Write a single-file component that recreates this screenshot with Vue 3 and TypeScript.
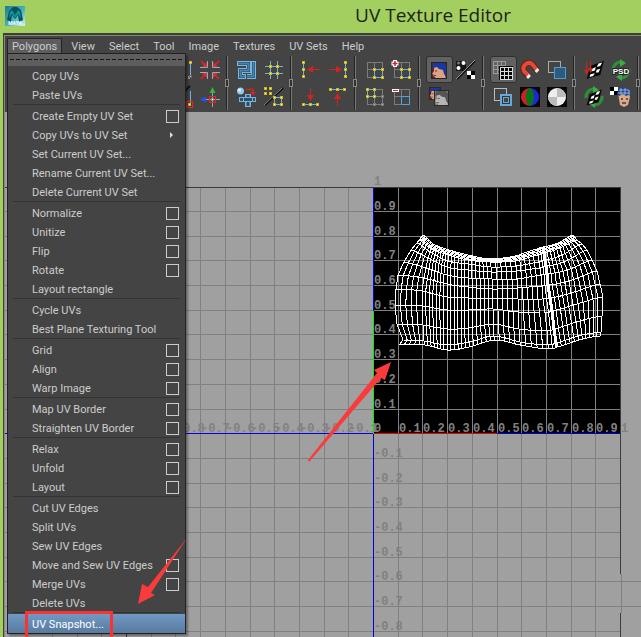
<script setup lang="ts">
type Point = [number, number]

interface MenuEntry {
  label: string
  option?: boolean
  submenu?: boolean
  active?: boolean
}

interface Tool {
  name: string
  art: string
  pressed?: boolean
}

const menus: string[] = ['View', 'Select', 'Tool', 'Image', 'Textures', 'UV Sets', 'Help']

const o = (label: string): MenuEntry => ({ label, option: true })
const p = (label: string): MenuEntry => ({ label })

const sections: MenuEntry[][] = [
  [p('Copy UVs'), p('Paste UVs')],
  [
    o('Create Empty UV Set'),
    { label: 'Copy UVs to UV Set', submenu: true },
    p('Set Current UV Set...'),
    p('Rename Current UV Set...'),
    p('Delete Current UV Set'),
  ],
  [o('Normalize'), o('Unitize'), o('Flip'), o('Rotate'), p('Layout rectangle')],
  [p('Cycle UVs'), p('Best Plane Texturing Tool')],
  [o('Grid'), o('Align'), o('Warp Image')],
  [o('Map UV Border'), o('Straighten UV Border')],
  [o('Relax'), o('Unfold'), o('Layout')],
  [
    p('Cut UV Edges'),
    p('Split UVs'),
    p('Sew UV Edges'),
    o('Move and Sew UV Edges'),
    o('Merge UVs'),
    p('Delete UVs'),
  ],
  [{ label: 'UV Snapshot...', active: true }],
]

/* ---- toolbar art, drawn on a 24 unit square ---- */
const node = (x: number, y: number, fill = '#ffffa8', edge = '#c9b51e'): string =>
  `<rect x="${x - 1}" y="${y - 1}" width="2" height="2" fill="${fill}" stroke="${edge}"/>`
const nodes = (list: Point[], fill?: string, edge?: string): string =>
  list.map(([x, y]) => node(x, y, fill, edge)).join('')
const line = (d: string, color: string, width = 1): string =>
  `<path d="${d}" fill="none" stroke="${color}" stroke-width="${width}"/>`
const solid = (d: string, color: string): string => `<path d="${d}" fill="${color}"/>`
const cells = line('M4 4.5H20M4 11.5H20M4 19.5H20M4.5 4V20M11.5 4V20M19.5 4V20', '#7c7c7c')
const blue = '#6fb0e0'
const red = '#d32222'
const face = (x: number, y: number, w: number, skin: string, hair: string, back: string): string =>
  `<g transform="translate(${x} ${y}) scale(${w / 16})">` +
  `<rect width="16" height="17" fill="${back}"/>` +
  solid('M3 5L9 4L14 7L14 13L15 17H5L4 15L2 14L3 13L1 12L3 9Z', skin) +
  solid('M1 5L3 1L13 1L15 4V14L13 12L12 8L8 7L6 5L2 6Z', hair) +
  line('M4 9H6M3 13.500H5', '#733') +
  `<rect x=".5" y=".5" width="15" height="16" fill="none" stroke="#262626"/></g>`
const dice =
  solid('M6 9L21 3L17 19L2 23Z', '#080808') +
  solid('M15 6L19 5L17 9L13 10ZM8 12L12 10L11 14L7 15ZM13 13L17 12L15 16L12 16ZM6 18L11 17L9 20L5 21Z', '#fff')
const cycle =
  line('M4 13A8 8 0 0 1 12 4', '#2d8f36', 3) +
  line('M20 11A8 8 0 0 1 12 20', '#2d8f36', 3) +
  solid('M11 1L17 5L11 9ZM13 15V23L7 19Z', '#3cab45')

const groups: Tool[][] = [
  [
    { name: 'Unfold vertices', art: line('M19.500 4V20', blue) + line('M18 18V21', '#999', 2) + nodes([[19.5, 4.5]]) + nodes([[19.5, 18.5]], '#bbb', '#666') },
    {
      name: 'Shrink inward',
      art:
        line('M2 9.500H9.500V3M2 14.500H9.500V21M22 9.500H14.500V3M22 14.500H14.500V21', '#7fb1d2') +
        line('M3 3L8 8M21 3L16 8M3 21L8 16M21 21L16 16', red, 2) +
        solid('M9 4V9H4ZM15 4V9H20ZM9 20V15H4ZM15 20V15H20Z', '#e32b2b'),
    },
    { name: 'Snap vertex', art: line('M3 17L19 1', '#111', 2) + line('M19.500 6V20', blue) + nodes([[18.5, 19.5]]) + '<rect x="15.500" y="16.500" width="6" height="6" fill="none" stroke="#e22" stroke-width="1"/>' },
    {
      name: 'Move axes',
      art:
        line('M7 14.500H22M14.500 8V22', '#9aa6ae') +
        solid('M14.500 2L17.500 8H11.500Z', '#35b83a') +
        solid('M1.500 14.500L8 11.500V17.500Z', '#2a4ee0') +
        node(14.5, 14.5, '#fff', '#888') +
        '<rect x="11.500" y="11.500" width="6" height="6" fill="none" stroke="#e22"/>',
    },
  ],
  [
    {
      name: 'Layout shells',
      art:
        line('M2 5.500H13.500V12.500H5.500V18.500H11M18.500 3V18.500H12', '#79b5dd', 5) +
        line('M3 5.500H13.500V12.500H5.500V18.500H10M18.500 4V18.500H12', '#1f4663', 3) +
        line('M3 5.500H13.500V12.500H5.500V18.500H10M18.500 4V18.500H12', '#4b83ab', 2),
    },
    { name: 'Grid points', art: line('M3 8.500H21M3 15.500H21M8.500 3V21M15.500 3V21', blue) + nodes([[8.5, 8.5], [15.5, 8.5], [8.5, 15.5], [15.5, 15.5]]) },
    {
      name: 'Map cube',
      art:
        solid('M4 12H10V9H16V12H21V17H16V22H10V17H4Z', '#7ab3dc') +
        line('M5 14.500H20M13 10V21', '#28506c', 3) +
        line('M8.500 12V17M10.500 16.500H16M10.500 12.500H16M17.500 12V17', '#7ab3dc') +
        '<circle cx="5.500" cy="6" r="3.500" fill="#8fc9ec"/><circle cx="4.500" cy="5" r="1.500" fill="#dff3ff"/>' +
        line('M11 4.500H18V8', red, 1.5) +
        solid('M15 7H21L18 11Z', red),
    },
    {
      name: 'Split points',
      art: line('M3 20L21 3', '#111', 2) + line('M2 20L20 3', '#888') + line('M12.500 12.500H19.500V19.500H12.500Z', blue) + nodes([[3.5, 3.5], [8.5, 3.5], [3.5, 8.5], [8.5, 8.5], [12.5, 12.5], [19.5, 12.5], [12.5, 19.5], [19.5, 19.5]]),
    },
  ],
  [
    { name: 'Align left', art: line('M4.500 4V19', blue) + nodes([[4.5, 4.5], [4.5, 11.5], [4.5, 18.5]]) + line('M12 11.500H21', red) + solid('M8 11.500L14 8V15Z', red) },
    { name: 'Align right', art: line('M19.500 4V19', blue) + nodes([[19.5, 4.5], [19.5, 11.5], [19.5, 18.5]]) + line('M3 11.500H12', red) + solid('M16 11.500L10 8V15Z', red) },
    { name: 'Align bottom', art: line('M4 19.500H19', blue) + nodes([[4.5, 19.5], [11.5, 19.5], [18.5, 19.5]]) + line('M11.500 3V11', red) + solid('M11.500 16L8 10H15Z', red) },
    { name: 'Align top', art: line('M4 4.500H19', blue) + nodes([[4.5, 4.5], [11.5, 4.5], [18.5, 4.5]]) + line('M11.500 12V21', red) + solid('M11.500 8L8 14H15Z', red) },
  ],
  [
    { name: 'Isolate selection', art: cells + line('M11.500 11.500H19.500V19.500H11.500Z', blue) + nodes([[11.5, 11.5], [19.5, 11.5], [11.5, 19.5], [19.5, 19.5]]) },
    { name: 'Add selection', art: cells + line('M11.500 11.500H19.500V19.500H11.500Z', blue) + nodes([[11.5, 11.5], [19.5, 11.5], [11.5, 19.5], [19.5, 19.5]]) + line('M5 2V9M1.500 5.500H8.500', '#fff', 4) + line('M5 3V8M2.500 5.500H7.500', red, 1.5) },
    { name: 'Toggle isolation', art: cells + line('M4.500 4.500H11.500V11.500H4.500Z', blue) + nodes([[11.5, 19.5], [19.5, 19.5], [19.5, 11.5]], '#bbb', '#777') + nodes([[4.5, 4.5], [11.5, 4.5], [4.5, 11.5], [11.5, 11.5]]) },
    { name: 'Remove selection', art: cells + line('M11.500 11.500H19.500V19.500H11.500Z', '#4fa3e2') + '<rect x="2" y="4" width="7" height="3" fill="#fff"/>' + line('M3 5.500H8', red) },
  ],
  [
    { name: 'Display image', pressed: true, art: face(4, 4, 16, '#dfa183', '#1639a4', '#5a2420') },
    {
      name: 'Filtered image',
      art:
        '<rect x="2" y="3" width="10" height="10" fill="#161616"/><circle cx="9.500" cy="5" r="2" fill="#fff"/><circle cx="4.500" cy="10" r="2" fill="#fff"/><circle cx="4.500" cy="5" r="1.500" fill="#777"/>' +
        line('M3 21L21 3', '#111', 2) + line('M2 21L21 2', '#999') +
        '<rect x="13" y="13" width="8" height="8" fill="#fff"/><path d="M17 13h4v4h-4zM13 17h4v4h-4z" fill="#000"/>',
    },
    { name: 'Dim image', art: face(2, 2, 12, '#dfa183', '#1639a4', '#5a2420') + face(7, 5, 15, '#b5b5b5', '#555', '#7d7d7d') },
    { name: '', art: '' },
  ],
  [
    {
      name: 'Toggle grid',
      pressed: true,
      art:
        line('M2 3.500H15M2 7.500H15M2 11.500H15M2 15.500H15M2.500 3V16M6.500 3V16M10.500 3V16M14.500 3V16', '#9a9a9a') +
        '<rect x="8" y="8" width="14" height="14" fill="#080808"/>' + line('M9 9.500H22M9 13.500H22M9 17.500H22M9 21.500H22M9.500 9V22M13.500 9V22M17.500 9V22M21.500 9V22', '#ddd'),
    },
    { name: 'Pixel snap', art: line('M11 19L6 13A5.500 5.500 0 0 1 14 6L20 13', '#6b1c14', 6) + line('M11 18L6 13A5.500 5.500 0 0 1 14 6L19 12', '#df4c38', 4) + line('M9.500 17.500L11.500 19.500M18 11.500L20 13.500', '#eee', 4) },
    { name: 'Shade shells', art: '<rect x="3.500" y="3.500" width="12" height="11" fill="none" stroke="#aaa"/><rect x="9.500" y="9.500" width="11" height="11" fill="#2b5b81" stroke="#5799c8"/>' },
    { name: 'Shell borders', art: '<rect x="3.500" y="3.500" width="12" height="12" fill="none" stroke="#bbb"/><rect x="10" y="10" width="10" height="10" fill="#333" stroke="#66a9d8" stroke-width="2"/><rect x="12.500" y="12.500" width="5" height="5" fill="#444" stroke="#66a9d8"/>' },
    { name: 'Colour channels', art: '<rect x="2" y="2" width="20" height="20" fill="#080808"/>' + solid('M12 3A9 9 0 0 0 12 21Z', '#c92424') + solid('M12 3A9 9 0 0 1 12 21Z', '#2026d8') + '<ellipse cx="12" cy="12" rx="4" ry="9" fill="#06741a"/>' },
    { name: 'Alpha channel', art: '<rect x="2" y="2" width="20" height="20" fill="#080808"/><circle cx="12" cy="12" r="9" fill="#eee"/>' + solid('M12 12V3A9 9 0 0 1 21 12ZM12 12V21A9 9 0 0 1 3 12Z', '#bcbcbc') },
  ],
  [
    { name: 'Bake texture', art: `<g transform="translate(3 0) scale(.9)">${dice}</g>` + line('M4.500 4V14M8.500 3V12', red) + solid('M2 12H7L4.500 17ZM6 10H11L8.500 15Z', red) },
    { name: 'Update PSD', art: cycle + '<text x="12" y="16" text-anchor="middle" font-family="Liberation Sans, sans-serif" font-size="8" font-weight="700" fill="#fff" stroke="#222" stroke-width="2" paint-order="stroke">PSD</text>' },
    { name: 'Refresh image', art: cycle + `<g transform="translate(3 2) scale(.8)">${dice}</g>` },
    {
      name: 'Use image ratio',
      art:
        '<rect x="1" y="2" width="8" height="8" fill="#fff"/><path d="M1 2h4v4h-4zM5 6h4v4h-4z" fill="#000"/>' +
        '<path d="M9 8Q10 2 16 3Q22 4 21 12L19 20L15 22L11 20Z" fill="#d9a98b"/>' +
        '<path d="M8 9Q9 2 15 2Q22 3 22 12L19 10L17 11L14 9L10 11Z" fill="#263f88"/>' +
        line('M10 5H20M9 8H21M12 3V10M16 3V10M20 5V11', '#8fb4df') +
        line('M12 14H14M17 14H19M13 18H17', '#642f28', 1.5),
    },
  ],
]

/* ---- UV space ---- */
const originX = 373.5
const originY = 433.5
const unit = 247
const snap = (value: number): number => Math.floor(value) + 0.5
const at = (n: number): number => snap(originX + (n * unit) / 10)
const up = (n: number): number => snap(originY + 0.2 - (n * unit) / 10)

const range = (from: number, to: number): number[] =>
  Array.from({ length: to - from + 1 }, (_, i) => from + i)

const gridPath: string = [
  ...range(-14, 9).map((n) => `M${at(n)} 187V900`),
  ...range(-24, 9).map((n) => `M0 ${up(n)}H${n === -6 || n === -7 ? 660 : 620}`),
].join('')

interface Label {
  x: number
  y: number
  text: string
}
const fmt = (n: number): string => (n / 10).toString()
const labels: Label[] = [
  ...range(-8, 10).map((n) => ({ x: Math.floor(at(n)) + 1, y: 432, text: fmt(n) })),
  ...range(-8, 10).filter((n) => n !== 0).map((n) => ({ x: 374, y: Math.floor(up(n)) - 1, text: fmt(n) })),
]

/* Rings of the garment shell, top to hem, sampled on ten guide columns. */
const rings: Point[][] = [
  [[423, 235], [433, 244], [449, 250], [468, 255], [490, 259], [515, 256], [537, 249], [543, 247], [558, 243], [573, 235]],
  [[419, 240], [431, 249], [448, 255], [468, 260], [490, 262], [515, 261], [538, 255], [544, 253], [560, 248], [577, 240]],
  [[417, 243], [430, 252], [448, 261], [468, 264], [491, 267], [516, 266], [539, 262], [545, 260], [562, 255], [582, 244]],
  [[411, 250], [428, 258], [447, 267], [468, 270], [491, 272], [516, 271], [540, 268], [546, 266], [564, 262], [587, 250]],
  [[404, 262], [426, 268], [447, 275], [468, 278], [492, 279], [517, 279], [541, 275], [547, 274], [567, 270], [592, 260]],
  [[398, 275], [424, 278], [447, 284], [468, 287], [492, 289], [517, 288], [542, 286], [548, 285], [569, 281], [597, 271]],
  [[396, 289], [422, 291], [447, 297], [468, 298], [492, 298], [518, 299], [543, 299], [550, 298], [571, 293], [600, 284]],
  [[395, 305], [422, 306], [447, 310], [468, 310], [493, 309], [518, 312], [545, 313], [552, 311], [573, 305], [603, 297]],
  [[397, 324], [423, 325], [447, 329], [468, 328], [493, 324], [519, 329], [547, 331], [554, 329], [576, 322], [602, 316]],
  [[403, 340], [424, 341], [447, 345], [469, 342], [494, 336], [520, 342], [548, 345], [556, 343], [578, 336], [601, 332]],
  [[399, 345], [425, 345], [447, 350], [469, 347], [495, 340], [520, 345], [549, 349], [557, 347], [579, 340], [600, 336]],
]
const splits: number[] = [5, 7, 6, 6, 5, 5, 2, 5, 6]

const curve = (a: number, b: number, c: number, d: number, t: number): number =>
  0.5 * (2 * b + (c - a) * t + (2 * a - 5 * b + 4 * c - d) * t * t + (3 * b - a - 3 * c + d) * t * t * t)

const sample = (ring: Point[]): Point[] => {
  const out: Point[] = []
  splits.forEach((count, k) => {
    const b = ring[k]
    const c = ring[k + 1]
    const a = ring[Math.max(0, k - 1)]
    const d = ring[Math.min(ring.length - 1, k + 2)]
    for (let i = 0; i < count; i++) {
      const t = i / count
      out.push([b[0] + (c[0] - b[0]) * t, curve(a[1], b[1], c[1], d[1], t)])
    }
  })
  out.push(ring[ring.length - 1])
  return out
}

const rows: Point[][] = rings.map(sample)
const waist: Point[][] = [0.25, 0.5, 0.75].map((t) =>
  rows[0].map(([x, y], i): Point => [x + (rows[1][i][0] - x) * t, y + (rows[1][i][1] - y) * t]),
)
const toPath = (points: Point[]): string =>
  'M' + points.map(([x, y]) => `${x.toFixed(1)} ${y.toFixed(1)}`).join('L')
const meshPath: string = [
  ...rows.map(toPath),
  ...waist.map(toPath),
  ...rows[0].map((_, i) => toPath(rows.map((row) => row[i]))),
].join('')
const seamPath: string = toPath(rings.map((ring) => ring[7]))
</script>

<template>
  <div class="window">
    <header class="titlebar">
      <svg class="logo" viewBox="0 0 20 20" aria-hidden="true">
        <defs>
          <linearGradient id="logo-bg" x1="0" y1="0" x2="1" y2="1">
            <stop offset="0" stop-color="#1c7d88" />
            <stop offset=".6" stop-color="#55b5bd" />
            <stop offset="1" stop-color="#e5f5f4" />
          </linearGradient>
        </defs>
        <rect width="20" height="20" fill="url(#logo-bg)" />
        <path d="M2 14L4 5L8 1H12L16 4L18 14L14 16L13 9L10 13L7 9L6 16Z" fill="#07535e" />
        <path d="M7 4L10 9L13 4L15 6L16 12L13 8L10 12L7 8L4 12L5 6Z" fill="#10939b" />
        <text x="10" y="19" text-anchor="middle" font-size="5" font-weight="700" fill="#e9ffff">MAYA</text>
      </svg>
      <h1>UV Texture Editor</h1>
    </header>

    <div class="frame">
      <nav class="menubar">
        <div class="menu-root">
          <button class="menu-title open" type="button" aria-expanded="true">Polygons</button>
          <div class="dropdown">
            <button class="tear" type="button" aria-label="Tear off menu"><span /></button>
            <ul v-for="(section, s) in sections" :key="s" class="section">
              <li v-for="entry in section" :key="entry.label" class="row" :class="{ active: entry.active }">
                <button class="entry" type="button">{{ entry.label }}</button>
                <button v-if="entry.option" class="option" type="button" :aria-label="entry.label + ' options'" />
                <i v-if="entry.submenu" class="caret" />
              </li>
            </ul>
          </div>
        </div>
        <button v-for="menu in menus" :key="menu" class="menu-title" type="button">{{ menu }}</button>
      </nav>

      <div class="toolbar">
        <template v-for="(group, g) in groups" :key="g">
          <div class="tools">
            <template v-for="tool in group" :key="tool.name">
              <button v-if="tool.name" class="tool" :class="{ pressed: tool.pressed }" type="button" :aria-label="tool.name">
                <svg viewBox="-1 -2 27 27" aria-hidden="true" v-html="tool.art" />
              </button>
            </template>
          </div>
          <span class="divider"><i /></span>
        </template>
      </div>

      <main class="viewport">
        <svg class="space" aria-label="UV space">
          <g transform="translate(-5 -112)">
            <rect x="374" y="188" width="247" height="246" fill="#000" />
            <path class="grid" :d="gridPath" />
            <path class="edge" d="M0 187.500H620.500V574M620.500 613V900M126.500 187V900" />
            <path class="grid" d="M621.500 574V613" />
            <path class="mesh" :d="meshPath" />
            <path class="mesh seam" :d="seamPath" />
            <text v-for="label in labels" :key="label.text + label.x + label.y" class="tick" :x="label.x" :y="label.y">{{ label.text }}</text>
            <path class="axis" stroke="#0000e0" d="M0 433.500H373M497 433.500H620M373.500 434V900M373.500 188V311" />
            <path class="axis" stroke="#00f000" d="M373.500 311V434" />
            <path class="axis" stroke="#f00000" d="M374 433.500H497" />
          </g>
        </svg>
      </main>
    </div>

    <svg class="notes" aria-hidden="true">
      <path d="M391 362L374 370L377 373L308 460L309 462L381 378L385 380Z" />
      <path d="M187 538L148 587L142 584L138 604L155 595L151 593Z" />
      <rect x="26.500" y="612.500" width="85" height="26" />
    </svg>
  </div>
</template>

<style>
body {
  margin: 0;
  overflow: hidden;
}
</style>

<style scoped>
.window {
  position: relative;
  display: flex;
  flex-direction: column;
  height: 100vh;
  overflow: hidden;
  background: #a3cf61;
  color: #ccc;
  font-family: Roboto, 'Noto Sans', sans-serif;
  font-size: 11px;
}
button {
  margin: 0;
  padding: 0;
  border: 0;
  background: none;
  color: inherit;
  font: inherit;
}
.titlebar {
  display: flex;
  align-items: center;
  flex: none;
  height: 33px;
  padding: 0 130px 2px 5px;
  box-sizing: border-box;
}
.logo {
  width: 20px;
  height: 20px;
}
.titlebar h1 {
  margin: 0 0 0 auto;
  padding-bottom: 2px;
  color: #1d2313;
  font-family: 'Open Sans', 'Noto Sans', sans-serif;
  font-size: 19px;
  font-weight: 400;
  line-height: 28px;
}
.frame {
  display: flex;
  flex: 1;
  flex-direction: column;
  min-height: 0;
  margin-left: 3px;
  border-top: 2px solid #3b4132;
  border-left: 1px solid #3f482f;
  box-shadow: inset 1px 1px #858585;
  padding: 1px 0 0 1px;
  background: #444;
}
.menubar {
  display: flex;
  flex: none;
  align-items: center;
  height: 20px;
  padding-left: 2px;
}
.menu-root {
  position: relative;
  margin-right: 2px;
}
.menu-title {
  display: block;
  height: 17px;
  padding: 0 7px;
  line-height: 17px;
}
.menu-title.open {
  padding: 0 4px;
  border: 1px solid #242424;
  background: #5d5d5d;
  line-height: 15px;
}
.dropdown {
  position: absolute;
  z-index: 2;
  top: 15px;
  left: 0;
  width: 177px;
  border: 1px solid #222;
  background: #444;
  box-shadow: 2px 2px 2px rgba(0, 0, 0, 0.35);
}
.tear {
  display: flex;
  align-items: center;
  width: 100%;
  height: 12px;
  padding: 0 2px;
  background: #5e5e5e;
}
.tear span {
  flex: 1;
  height: 1px;
  background: repeating-linear-gradient(90deg, #161616 0 4px, transparent 4px 6px);
}
.section {
  margin: 0;
  padding: 0;
  list-style: none;
}
.section + .section::before {
  display: block;
  height: 1px;
  margin: 0 5px 1px 5px;
  background: #333;
  content: '';
}
.row {
  display: flex;
  align-items: center;
  box-sizing: border-box;
  height: 19px;
  padding: 2px 6px 0 24px;
}
.entry {
  flex: 1;
  height: 17px;
  line-height: 17px;
  text-align: left;
  white-space: nowrap;
}
.option {
  width: 13px;
  height: 13px;
  border: 1px solid #ccc;
}
.caret {
  margin-right: 6px;
  border-top: 3px solid transparent;
  border-bottom: 3px solid transparent;
  border-left: 3px solid #ddd;
}
.active {
  background: linear-gradient(#7099c4, #587a9e);
  color: #fff;
}
.toolbar {
  display: flex;
  flex: none;
  height: 56px;
  padding-left: 165px;
  overflow: hidden;
}
.tools {
  display: grid;
  flex: none;
  grid-template-columns: repeat(2, 27px);
  grid-template-rows: 27px 27px;
}
.tools:nth-of-type(6) {
  grid-template-columns: repeat(3, 27px);
}
.tool {
  width: 27px;
  height: 27px;
}
.tool svg {
  display: block;
  width: 27px;
  height: 27px;
}
.pressed {
  border-radius: 3px;
  background: #626262;
  box-shadow: inset 0 0 0 1px #303030;
}
.divider {
  display: grid;
  flex: none;
  align-items: center;
  width: 10px;
  height: 54px;
  background: linear-gradient(90deg, transparent 2px, #242424 2px 3px, #777 3px 4px, transparent 4px);
}
.divider i {
  width: 4px;
  height: 8px;
  margin-left: 1px;
  box-sizing: border-box;
  border: 1px solid #888;
  background: #333;
}
.viewport {
  flex: 1;
  min-height: 0;
  overflow: hidden;
  background: #a0a0a0;
}
.space {
  display: block;
  width: 100%;
  height: 100%;
}
.grid,
.edge,
.axis,
.mesh {
  fill: none;
  shape-rendering: crispEdges;
}
.grid {
  stroke: #808080;
}
.edge {
  stroke: #3b3b3b;
}
.mesh {
  stroke: #fff;
}
.seam {
  stroke-width: 3px;
}
.tick {
  fill: #818181;
  font-family: 'Liberation Mono', monospace;
  font-size: 12px;
  font-weight: 700;
}
.notes {
  position: absolute;
  z-index: 3;
  top: 0;
  left: 0;
  width: 100%;
  height: 100%;
  pointer-events: none;
}
.notes path {
  fill: #fb3b3b;
}
.notes rect {
  fill: none;
  stroke: #fb3232;
  stroke-width: 3px;
}
</style>
